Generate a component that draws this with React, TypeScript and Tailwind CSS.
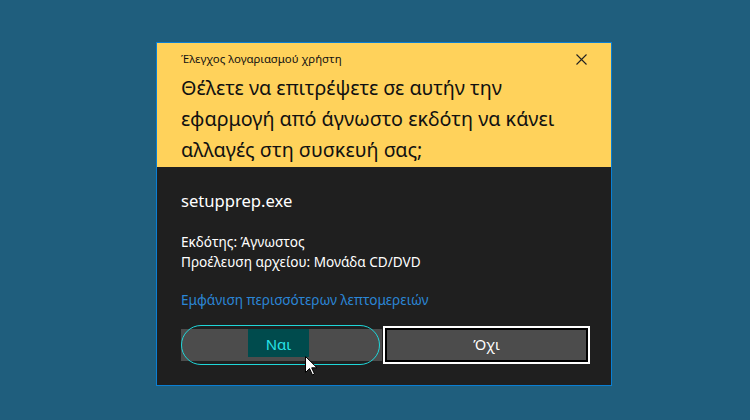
import React from "react";

function Cursor() {
  return (
    <svg
      className="absolute left-[124px] top-[31px]"
      width="13"
      height="20"
      viewBox="0 0 13 20"
    >
      <path
        d="M0.5 0.5 L0.5 16.5 L4.5 12.5 L7.5 19 L9.5 18 L6.7 11.8 L12 11.8 Z"
        fill="white"
        stroke="black"
        strokeWidth="1"
        strokeLinejoin="miter"
      />
    </svg>
  );
}

export default function App() {
  return (
    <div
      className="w-[750px] h-[420px] bg-[#1f5e7d] pt-[42px] pl-[156px] overflow-hidden"
      style={{ fontFamily: '"Noto Sans", "Open Sans", sans-serif' }}
    >
      <div className="w-[456px] h-[344px] border border-[#0a7fd4] flex flex-col">
        <section className="bg-[#ffd25b] h-[124px] pl-6 pr-4 pt-2 text-[#111]">
          <div className="flex items-center justify-between h-4">
            <p className="text-[11.4px] leading-4">Έλεγχος λογαριασμού χρήστη</p>
            <svg width="11" height="11" viewBox="0 0 11 11" className="mr-[8px]">
              <path d="M0.5 0.5 L10.5 10.5 M10.5 0.5 L0.5 10.5" stroke="#222" strokeWidth="1.1" />
            </svg>
          </div>
          <h1 className="mt-[5px] text-[19.75px] leading-[31px]">
            Θέλετε να επιτρέψετε σε αυτήν την
            <br />
            εφαρμογή από άγνωστο εκδότη να κάνει
            <br />
            αλλαγές στη συσκευή σας;
          </h1>
        </section>
        <section className="flex-1 bg-[#1f1f1f] pl-6 pr-[21px] pt-[23px] text-white">
          <p className="text-[16.6px] leading-[22px]">setupprep.exe</p>
          <div className="mt-5 text-[13.6px] leading-5">
            <p>Εκδότης: Άγνωστος</p>
            <p>Προέλευση αρχείου: Μονάδα CD/DVD</p>
          </div>
          <p className="mt-[18px] text-[13.6px] leading-5 text-[#2b86d6]">
            Εμφάνιση περισσότερων λεπτομερειών
          </p>
          <div className="mt-[15px] flex items-center gap-px">
            <div className="relative w-[201px] h-[40px]">
              <div className="absolute left-0 right-0 top-[4px] h-[32px] bg-[#4c4c4c]" />
              <div className="absolute inset-y-0 left-0 right-[2px] rounded-full border-[1.5px] border-[#1fd6d9]" />
              <div className="absolute left-[67px] top-[4px] w-[61px] h-[28px] bg-[#004b4d] flex items-center justify-center pt-[2px] text-[15px] text-[#27e3e6]">
                Ναι
              </div>
              <Cursor />
            </div>
            <button className="w-[207px] h-[38px] border-2 border-white bg-[#4c4c4c] shadow-[inset_0_0_0_2px_#000] text-[14.5px] text-white">
              Όχι
            </button>
          </div>
        </section>
      </div>
    </div>
  );
}
